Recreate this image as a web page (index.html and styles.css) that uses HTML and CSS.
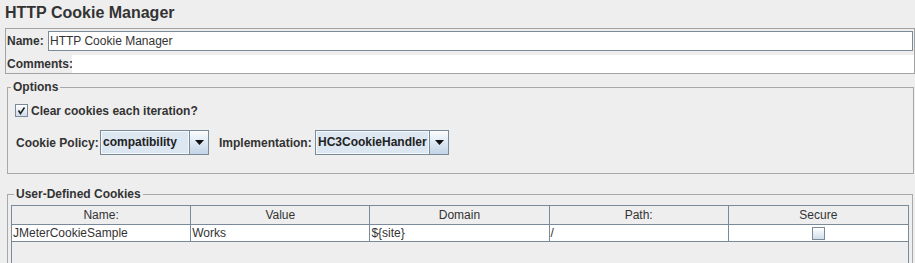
FILE: index.html
```html
<!DOCTYPE html>
<html lang="en">
<head>
    <meta charset="UTF-8">
    <meta name="viewport" content="width=device-width, initial-scale=1.0">
    <title>HTTP Cookie Manager</title>
    <link rel="stylesheet" href="styles.css">
</head>
<body>
    <h1 class="title">HTTP Cookie Manager</h1>

    <div class="name-panel">
        <div class="name-row">
            <label class="name-label" for="nameField">Name:</label>
            <input type="text" id="nameField" class="text-field" value="HTTP Cookie Manager">
        </div>
        <div class="comments-row">
            <label class="comments-label">Comments:</label>
            <div class="comments-area"></div>
        </div>
    </div>

    <fieldset class="group options">
        <legend>Options</legend>
        <div class="check-row">
            <span class="checkbox">
                <svg width="13" height="13" viewBox="0 0 13 13">
                    <path d="M3.5 6.5 L5.5 9.5 L9.5 3.5" fill="none" stroke="#222" stroke-width="1.6"/>
                </svg>
            </span>
            <span>Clear cookies each iteration?</span>
        </div>
        <div class="combo-row">
            <span class="combo-label policy-label">Cookie Policy:</span>
            <div class="combo policy-combo">
                <span class="combo-value">compatibility</span>
                <span class="combo-button">
                    <svg width="9" height="5" viewBox="0 0 9 5"><polygon points="0,0 9,0 4.5,5" fill="#111"/></svg>
                </span>
            </div>
            <span class="combo-label impl-label">Implementation:</span>
            <div class="combo impl-combo">
                <span class="combo-value">HC3CookieHandler</span>
                <span class="combo-button">
                    <svg width="9" height="5" viewBox="0 0 9 5"><polygon points="0,0 9,0 4.5,5" fill="#111"/></svg>
                </span>
            </div>
        </div>
    </fieldset>

    <fieldset class="group cookies">
        <legend>User-Defined Cookies</legend>
        <div class="table-pane">
            <table class="cookie-table">
                <thead>
                    <tr>
                        <th>Name:</th>
                        <th>Value</th>
                        <th>Domain</th>
                        <th>Path:</th>
                        <th>Secure</th>
                    </tr>
                </thead>
                <tbody>
                    <tr>
                        <td>JMeterCookieSample</td>
                        <td>Works</td>
                        <td>${site}</td>
                        <td>/</td>
                        <td class="secure-cell"><span class="small-check"></span></td>
                    </tr>
                </tbody>
            </table>
        </div>
    </fieldset>
</body>
</html>
```

FILE: styles.css
```css
body {
    margin: 0;
    padding: 0;
    background: #eeeeee;
    color: #333333;
    font-family: "Liberation Sans", Arial, sans-serif;
    font-size: 12px;
    overflow: hidden;
}

.title {
    margin: 0;
    padding: 3px 5px 5px;
    font-size: 16px;
    line-height: 20px;
    font-weight: bold;
}

/* name / comments box */
.name-panel {
    margin-left: 5px;
    border: 1px solid #a3a3a3;
    padding: 1px 0 0 0;
}

.name-row {
    display: flex;
    align-items: center;
    height: 20px;
    margin-top: 1px;
    margin-right: 1px;
}

.name-label {
    width: 41px;
    padding-left: 1px;
    font-weight: bold;
}

.text-field {
    flex: 1;
    box-sizing: border-box;
    height: 20px;
    margin: 0;
    padding: 0 1px;
    border: 1px solid #7a8a99;
    background: white;
    color: #333333;
    font-family: "Liberation Sans", Arial, sans-serif;
    font-size: 12px;
    outline: none;
}

.comments-row {
    display: flex;
    align-items: center;
    height: 18px;
    margin-top: 4px;
}

.comments-label {
    width: 65px;
    padding-left: 1px;
    font-weight: bold;
}

.comments-area {
    flex: 1;
    height: 18px;
    background: white;
}

/* titled groups */
.group {
    border: 1px solid #a8a8a8;
    padding: 0;
    min-width: 0;
}

.group legend {
    margin-left: 3px;
    padding: 0 2px;
    font-weight: bold;
    line-height: 14px;
}

.options {
    margin: 6px 1px 0 7px;
    padding-bottom: 18px;
}

.check-row {
    display: flex;
    align-items: center;
    gap: 3px;
    height: 13px;
    margin-top: 10px;
    padding-left: 7px;
    font-weight: bold;
}

.checkbox {
    width: 13px;
    height: 13px;
    box-sizing: border-box;
    border: 1px solid #7a8a99;
    background: linear-gradient(#ffffff, #cfdcea);
    display: flex;
    align-items: center;
    justify-content: center;
}

.checkbox svg {
    flex: none;
}

.combo-row {
    display: flex;
    align-items: center;
    height: 25px;
    margin-top: 13px;
    padding-left: 8px;
}

.combo-label {
    font-weight: bold;
    white-space: nowrap;
}

.policy-label {
    width: 84px;
}

.impl-label {
    width: 96px;
    margin-left: 10px;
}

.combo {
    display: flex;
    box-sizing: border-box;
    height: 25px;
    border: 1px solid #7a8a99;
}

.policy-combo {
    width: 109px;
}

.impl-combo {
    width: 134px;
}

.combo-value {
    flex: 1;
    padding-left: 2px;
    line-height: 23px;
    font-weight: bold;
    color: #222;
    background: #dde7f2;
    box-shadow: inset 1px 1px 0 #f4f8fc, inset -1px -1px 0 #f4f8fc;
    white-space: nowrap;
    overflow: hidden;
}

.combo-button {
    width: 18px;
    border-left: 1px solid #7a8a99;
    background: linear-gradient(#fbfdff, #dbe6f2 55%, #c2d4e7);
    display: flex;
    align-items: center;
    justify-content: center;
}

/* cookie table */
.cookies {
    margin: 13px 2px 0 7px;
    padding: 0 3px;
}

.table-pane {
    margin-top: 4px;
    height: 58px;
    border: 1px solid #7a8a99;
    border-bottom: none;
}

.cookie-table {
    width: 100%;
    table-layout: fixed;
    border-collapse: separate;
    border-spacing: 0;
}

.cookie-table th {
    height: 18px;
    padding: 0;
    line-height: 18px;
    font-weight: normal;
    text-align: center;
    background: #eeeeee;
    border-right: 1px solid #7a8a99;
    border-bottom: 1px solid #7a8a99;
}

.cookie-table td {
    height: 16px;
    padding: 0 1px;
    line-height: 16px;
    background: white;
    white-space: nowrap;
    overflow: hidden;
    border-right: 1px solid #7a8a99;
    border-bottom: 1px solid #7a8a99;
}

.cookie-table th:last-child,
.cookie-table td:last-child {
    border-right: none;
}

.secure-cell {
    text-align: center;
}

.small-check {
    display: inline-block;
    width: 13px;
    height: 13px;
    box-sizing: border-box;
    margin-top: 2px;
    vertical-align: top;
    border: 1px solid #7a8a99;
    background: linear-gradient(#ffffff, #cfdcea);
}
```
